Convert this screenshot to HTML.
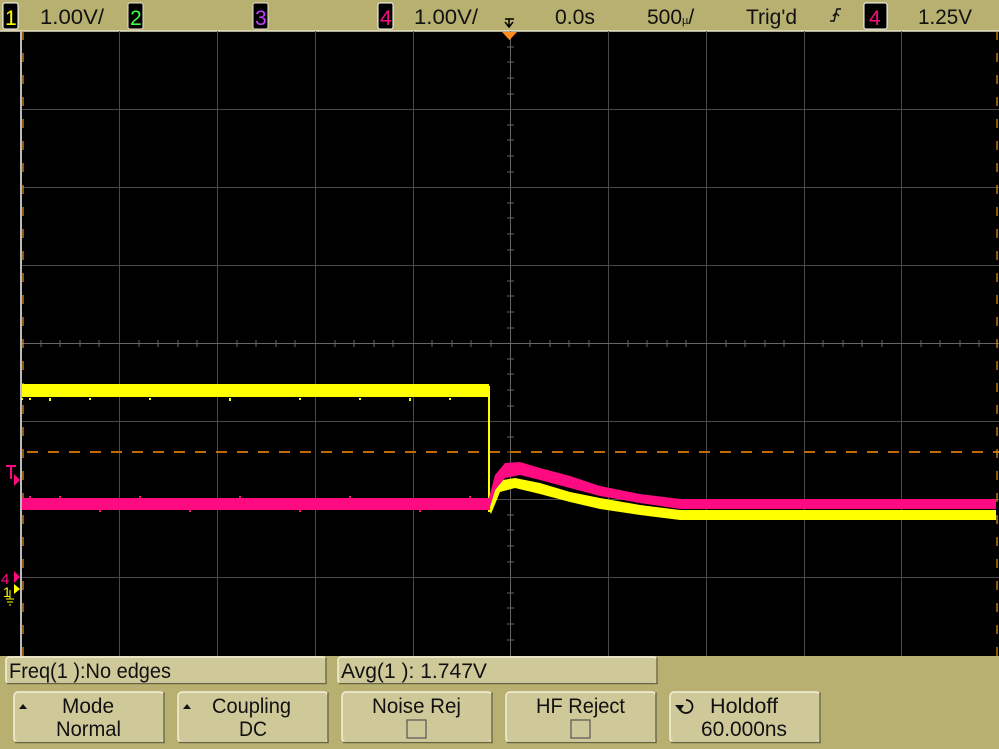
<!DOCTYPE html>
<html><head><meta charset="utf-8"><style>
html,body{margin:0;padding:0;background:#b8b070;width:999px;height:749px;overflow:hidden;font-family:"Liberation Sans",sans-serif;}
svg{position:absolute;left:0;top:0}
text{font-family:"Liberation Sans",sans-serif}
</style></head><body>
<svg width="999" height="749" viewBox="0 0 999 749">
<rect x="0" y="0" width="999" height="749" fill="#b8b070"/>
<rect x="0" y="31" width="999" height="625" fill="#000"/>
<line x1="0" y1="31" x2="999" y2="31" stroke="#e8e4c8" stroke-width="1.5"/>
<g stroke="#4a4a4a" stroke-width="1">
<line x1="119.5" y1="31" x2="119.5" y2="656"/><line x1="217.5" y1="31" x2="217.5" y2="656"/>
<line x1="315.5" y1="31" x2="315.5" y2="656"/><line x1="413.5" y1="31" x2="413.5" y2="656"/>
<line x1="510.5" y1="31" x2="510.5" y2="656" stroke="#666"/><line x1="608.5" y1="31" x2="608.5" y2="656"/>
<line x1="706.5" y1="31" x2="706.5" y2="656"/><line x1="804.5" y1="31" x2="804.5" y2="656"/>
<line x1="901.5" y1="31" x2="901.5" y2="656"/>
<line x1="21" y1="109.5" x2="999" y2="109.5"/><line x1="21" y1="187.5" x2="999" y2="187.5"/>
<line x1="21" y1="265.5" x2="999" y2="265.5"/><line x1="21" y1="343.5" x2="999" y2="343.5" stroke="#666"/>
<line x1="21" y1="421.5" x2="999" y2="421.5"/><line x1="21" y1="499.5" x2="999" y2="499.5"/>
<line x1="21" y1="577.5" x2="999" y2="577.5"/>
</g>
<g stroke="#666" stroke-width="1">
<path d="M41 340v7M60 340v7M80 340v7M99 340v7M139 340v7M158 340v7M178 340v7M197 340v7M237 340v7M256 340v7M276 340v7M295 340v7M335 340v7M354 340v7M374 340v7M393 340v7M432 340v7M452 340v7M471 340v7M491 340v7M530 340v7M550 340v7M569 340v7M589 340v7M628 340v7M647 340v7M667 340v7M686 340v7M726 340v7M745 340v7M765 340v7M784 340v7M823 340v7M843 340v7M862 340v7M882 340v7M921 340v7M940 340v7M960 340v7M979 340v7"/>
<path d="M507 47h7M507 62h7M507 78h7M507 94h7M507 125h7M507 140h7M507 156h7M507 172h7M507 203h7M507 218h7M507 234h7M507 250h7M507 281h7M507 296h7M507 312h7M507 328h7M507 359h7M507 374h7M507 390h7M507 406h7M507 437h7M507 452h7M507 468h7M507 484h7M507 515h7M507 530h7M507 546h7M507 562h7M507 593h7M507 608h7M507 624h7M507 640h7"/>
</g>
<line x1="21" y1="31" x2="21" y2="656" stroke="#bbb" stroke-width="2"/>
<line x1="23" y1="31" x2="23" y2="656" stroke="#e8901a" stroke-width="1.2" stroke-dasharray="9 13"/>
<line x1="27" y1="452" x2="999" y2="452" stroke="#c06a0a" stroke-width="2" stroke-dasharray="11 10"/>
<!-- yellow -->
<rect x="22" y="384" width="467" height="13" fill="#ffff00"/>
<path d="M22 398v2M30 398v2M50 398v3M90 398v2M150 398v2M230 398v3M300 398v2M360 398v2M410 398v3M450 398v2" stroke="#ffff00" stroke-width="2"/>
<rect x="488" y="386" width="2" height="126" fill="#ffff00"/>
<polygon fill="#ffff00" points="489,510 495,490 503,480 515,478 540,483 570,492 600,498 640,505 680,510 996,510 996,520 680,520 640,515 600,509 570,502 540,494 515,488 500,492 491,514"/>
<!-- magenta -->
<rect x="22" y="498" width="468" height="12" fill="#ff0a80"/>
<path d="M30 496v2M60 496v2M100 510v2M140 496v2M190 510v2M240 496v2M300 510v2M350 496v2M420 510v2M470 496v2" stroke="#ff0a80" stroke-width="2"/>
<polygon fill="#ff0a80" points="489,498 495,475 505,463 520,462 540,468 570,476 600,486 640,494 680,499 996,499 996,509 680,509 640,503 600,496 570,488 540,480 520,475 505,478 495,490 489,510"/>
<line x1="997" y1="31" x2="997" y2="656" stroke="#e8901a" stroke-width="1.2" stroke-dasharray="9 13"/>
<!-- left markers -->
<path d="M6 466h10M11 466v13" stroke="#ff0a80" stroke-width="2"/>
<polygon points="14,474 20,480 14,486" fill="#ff0a80"/>
<text x="1" y="584" fill="#ff0a80" font-size="15">4</text>
<polygon points="14,571 20,577 14,583" fill="#ff0a80"/>
<text x="3" y="597" fill="#ffff00" font-size="14">1</text>
<polygon points="14,584 20,589 14,594" fill="#ffff00"/>
<path d="M6 599h8M7 602h6M9 605h2M10 590v9" stroke="#ffff00" stroke-width="1"/>
<!-- trigger marker -->
<polygon points="502,32 517,32 509.5,40" fill="#ff8c1a"/>
<path d="M505 19h9M509 19v7M505 22l4 5 4-5" stroke="#000" stroke-width="1.5" fill="none"/>
<!-- top bar -->
<g font-size="21">
<rect x="3" y="3" width="15" height="26" rx="2" fill="#000" stroke="#fff"/><text x="5" y="25" fill="#ffff00">1</text>
<text x="40" y="24" fill="#111" textLength="64" lengthAdjust="spacingAndGlyphs">1.00V/</text>
<rect x="128" y="3" width="15" height="26" rx="2" fill="#000" stroke="#e8e4c8"/><text x="130" y="25" fill="#40ff40">2</text>
<rect x="253" y="3" width="15" height="26" rx="2" fill="#000" stroke="#e8e4c8"/><text x="255" y="25" fill="#c040ff">3</text>
<rect x="378" y="3" width="15" height="26" rx="2" fill="#000" stroke="#fff"/><text x="380" y="25" fill="#ff0a80">4</text>
<text x="414" y="24" fill="#111" textLength="64" lengthAdjust="spacingAndGlyphs">1.00V/</text>
<text x="555" y="24" fill="#111" textLength="40" lengthAdjust="spacingAndGlyphs">0.0s</text>
<text x="647" y="24" fill="#111">500<tspan font-size="11">µ</tspan>/</text>
<text x="746" y="24" fill="#111" textLength="51" lengthAdjust="spacingAndGlyphs">Trig'd</text>
<path d="M830 21h4l3-12h4M833 16l3-3 3 3" stroke="#111" stroke-width="1.5" fill="none"/>
<rect x="864" y="3" width="23" height="26" rx="2" fill="#000" stroke="#fff"/><text x="869" y="25" fill="#ff0a80">4</text>
<text x="918" y="24" fill="#111" textLength="54" lengthAdjust="spacingAndGlyphs">1.25V</text>
</g>
<!-- bottom -->
<g stroke="#f4f0d8" stroke-width="1.5" fill="#cfc99a">
<rect x="6" y="657" width="320" height="26" rx="3"/>
<rect x="338" y="657" width="319" height="26" rx="3"/>
<rect x="14" y="692" width="150" height="50" rx="4"/>
<rect x="178" y="692" width="150" height="50" rx="4"/>
<rect x="342" y="692" width="150" height="50" rx="4"/>
<rect x="506" y="692" width="150" height="50" rx="4"/>
<rect x="670" y="692" width="150" height="50" rx="4"/>
</g>
<g stroke="#6a6640" stroke-width="1.5" fill="none">
<path d="M7 683.5h319v-26M339 683.5h318v-26M15 742.5h149v-50M179 742.5h149v-50M343 742.5h149v-50M507 742.5h149v-50M671 742.5h149v-50"/>
</g>
<g font-size="21" fill="#111" lengthAdjust="spacingAndGlyphs">
<text x="9" y="678" textLength="162" lengthAdjust="spacingAndGlyphs">Freq(1 ):No edges</text>
<text x="341" y="678" textLength="146" lengthAdjust="spacingAndGlyphs">Avg(1 ): 1.747V</text>
<text x="62" y="713" textLength="52" lengthAdjust="spacingAndGlyphs">Mode</text>
<text x="56" y="736" textLength="65" lengthAdjust="spacingAndGlyphs">Normal</text>
<text x="212" y="713" textLength="79" lengthAdjust="spacingAndGlyphs">Coupling</text>
<text x="239" y="736" textLength="28" lengthAdjust="spacingAndGlyphs">DC</text>
<text x="372" y="713" textLength="89" lengthAdjust="spacingAndGlyphs">Noise Rej</text>
<text x="536" y="713" textLength="89" lengthAdjust="spacingAndGlyphs">HF Reject</text>
<text x="710" y="713" textLength="68" lengthAdjust="spacingAndGlyphs">Holdoff</text>
<text x="701" y="736" textLength="86" lengthAdjust="spacingAndGlyphs">60.000ns</text>
</g>
<polygon points="19,709 27,709 23,704" fill="#111"/>
<polygon points="183,709 191,709 187,704" fill="#111"/>
<rect x="407" y="720" width="19" height="18" fill="#cfc99a" stroke="#555" stroke-width="1.2"/>
<rect x="571" y="720" width="19" height="18" fill="#cfc99a" stroke="#555" stroke-width="1.2"/>
<path d="M686 700a6.5 6.5 0 1 1 -6 9" stroke="#111" stroke-width="1.8" fill="none"/>
<polygon points="675,705 684,705 680,711" fill="#111"/>
</svg>
</body></html>
